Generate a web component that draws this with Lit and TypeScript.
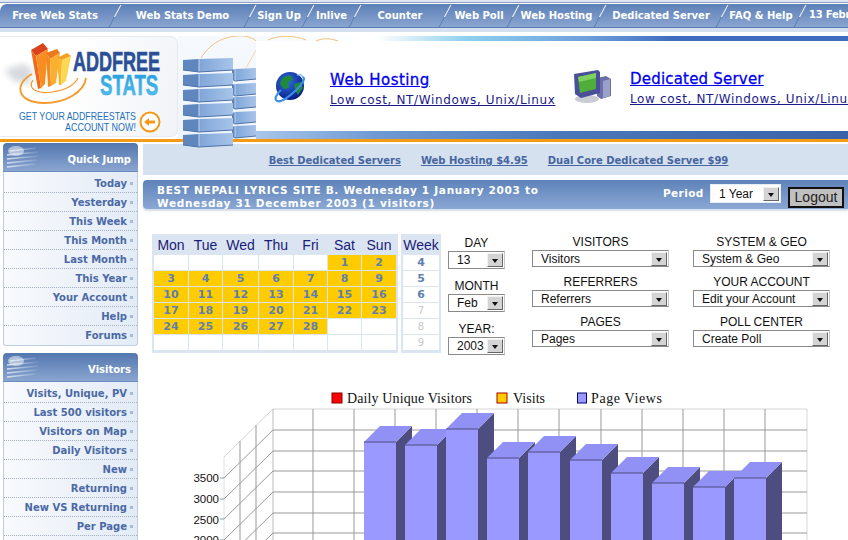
import { html, svg, css, LitElement } from 'lit';
import { customElement } from 'lit/decorators.js';

const NAV: [string, number][] = [
  ['Free Web Stats', 115], ['Web Stats Demo', 135], ['Sign Up', 58], ['Inlive', 47], ['Counter', 90],
  ['Web Poll', 68], ['Web Hosting', 87], ['Dedicated Server', 122], ['FAQ & Help', 78],
];
const QUICK = ['Today', 'Yesterday', 'This Week', 'This Month', 'Last Month', 'This Year', 'Your Account', 'Help', 'Forums'];
const VISITORS = ['Visits, Unique, PV', 'Last 500 visitors', 'Visitors on Map', 'Daily Visitors', 'New', 'Returning', 'New VS Returning', 'Per Page', ''];
const DAYS = ['Mon', 'Tue', 'Wed', 'Thu', 'Fri', 'Sat', 'Sun'];
const WEEKS = ['4', '5', '6', '7', '8', '9'];
const SELECTS = [
  ['VISITORS', 'Visitors', 'SYSTEM & GEO', 'System & Geo'],
  ['REFERRERS', 'Referrers', 'YOUR ACCOUNT', 'Edit your Account'],
  ['PAGES', 'Pages', 'POLL CENTER', 'Create Poll'],
];

// front x, top y of each bar in the chart
const BARS = [[364, 442], [405, 445], [446, 429], [487, 458], [528, 452], [570, 460], [611, 473], [652, 483], [693, 487], [734, 478]];
const GRID_X = [313, 354, 395, 436, 477, 518, 559, 601, 642, 683, 724, 765];
const GRID_Y = [430, 451, 471, 492, 513, 533];

const brick = (x: number, y: number, w: number, h: number, face: number) => svg`
  <polygon points="${x},${y + 1} ${x + face},${y} ${x + face},${y + h} ${x},${y + h - 2}" fill="#5f86bd"/>
  <polygon points="${x + face},${y} ${x + w},${y - 1} ${x + w},${y + h - 2} ${x + face},${y + h}" fill="url(#brickFront)"/>
  <path d="M${x + face} ${y}V${y + h}" stroke="#d8e6f6" stroke-width=".8"/>
  <path d="M${x} ${y + h - 2}L${x + face} ${y + h}L${x + w} ${y + h - 2}" fill="none" stroke="#4c72a8"/>`;

const bricks = () => [
  ...[69, 84, 97, 112, 126].map((y) => brick(232, y, 24, 12, 3)),
  ...[59, 74, 89, 104, 119, 134].map((y) => brick(183, y, 50, 13, 16)),
];

@customElement('app-root')
export class AppRoot extends LitElement {
  static styles = css`
    :host {
      display: block;
      width: 848px;
      height: 540px;
      overflow: hidden;
      position: relative;
      background: #fff;
      font-family: "DejaVu Sans", sans-serif;
    }
    * { box-sizing: border-box; }

    .topline { height: 4px; background: #dfe6f1; border-bottom: 1px solid #fff; border-top: 2px solid #dfe6f1; box-shadow: inset 0 1px 0 #8b9cc2; }
    .nav {
      display: flex;
      height: 24px;
      align-items: center;
      background: linear-gradient(#5c80b8, #8aa5d0);
      border-bottom: 1px solid #5a7cb2;
      border-top-left-radius: 7px;
      color: #fff;
      font-size: 10px;
      font-weight: bold;
      white-space: nowrap;
      overflow: hidden;
    }
    .nav-item { position: relative; text-align: center; flex: none; line-height: 22px; }
    .nav-item:first-child { padding-right: 5px; }
    .nav-item::after {
      content: "";
      position: absolute;
      right: 0;
      top: 0;
      width: 1px;
      height: 24px;
      transform: skewX(-28deg);
      background: linear-gradient(#fff 50%, #5a7cb2 50%);
    }
    .nav-date { padding-left: 9px; margin-top: -3px; letter-spacing: -0.2px; }
    .under { height: 8px; background: linear-gradient(#d6e1ef 50%, #fff 50%); }

    .header { display: flex; height: 103px; position: relative; }
    .logo { flex: none; width: 178px; height: 101px; background: linear-gradient(100deg, #fff 40%, #f1f3f7); border: 1px solid #e8eaee; border-left: 0; border-radius: 0 7px 7px 0; }
    .logo svg { display: block; }
    .gap { flex: none; width: 78px; background: linear-gradient(#f6fafe, #eef4fb); }
    .banner { flex: 1; min-width: 0; display: flex; flex-direction: column; }
    .strip-top { height: 5px; background: linear-gradient(90deg, #f6fafe 0, #fff 120px, #8fd0ee 210px, #6ea0da 330px, #3d6cc0 420px, #3d6cc0 100%); }
    .ads { height: 90px; display: flex; background: #fff; overflow: hidden; }
    .strip-bottom { height: 8px; background: linear-gradient(90deg, #a9c6ea, #6e9ad4 120px, #4b78bb 300px, #3a62a8 100%); }
    .ad { display: flex; }
    .ad-one { flex: none; width: 317px; padding-left: 17px; }
    .ad-two { flex: 1; min-width: 0; }
    .ad svg { flex: none; margin-top: 29px; }
    .ad-copy { padding-top: 29px; white-space: nowrap; }
    .ad-one .ad-copy { margin-left: 23px; }
    .ad-two .ad-copy { margin-left: 19px; margin-top: -1px; }
    .ad-title { color: #0000ee; font-size: 15px; font-weight: 500; text-decoration: underline; letter-spacing: 0.45px; line-height: 20px; -webkit-text-stroke: 0.3px #0000ee; }
    .ad-two .ad-title { letter-spacing: 0.2px; }
    .ad-sub { color: #1a1a8a; font-size: 12px; text-decoration: underline; letter-spacing: 0.65px; margin-top: 2px; line-height: 16px; }
    .orange { height: 3px; background: #f49a14; }
    .bricks { position: absolute; left: 178px; top: 36px; pointer-events: none; }

    .body { display: grid; grid-template-columns: 143px 1fr; }

    .side { padding: 1px 5px 0 3px; }
    .box { margin-bottom: 7px; }
    .box-head {
      height: 29px;
      position: relative;
      background: linear-gradient(#5377b0, #8aa5d0);
      border-radius: 4px 4px 0 0;
      border-bottom: 1px solid #6b8cc0;
      color: #fff;
      font-size: 10px;
      font-weight: bold;
      text-align: right;
      padding: 11px 7px 0 0;
      overflow: hidden;
    }
    .box-head svg { position: absolute; left: 0; top: 0; }
    .box-body { border: 1px solid #bccee4; border-top: 0; border-radius: 0 0 3px 3px; background: linear-gradient(90deg, #f8fafd, #e3ebf6); padding-top: 2px; }
    .row {
      height: 19px;
      border-bottom: 1px dotted #a3aec0;
      display: flex;
      justify-content: flex-end;
      align-items: center;
      padding-right: 4px;
      color: #4a69a5;
      font-size: 10px;
      font-weight: bold;
      white-space: nowrap;
    }
    .row i { width: 3px; height: 3px; background: #a8bad4; margin-left: 3px; }
    .row:last-child { border-bottom: 0; }

    .main { display: flex; flex-direction: column; }
    .links {
      height: 31px;
      margin-top: 2px;
      background: #d6e1ef;
      display: flex;
      justify-content: center;
      gap: 20px;
      padding: 11px 0 0 6px;
      font-size: 10px;
      font-weight: bold;
      color: #47659f;
      white-space: nowrap;
    }
    .links span { text-decoration: underline; }
    .title {
      height: 29px;
      margin-top: 5px;
      background: linear-gradient(#5e82b9, #8aa8d4);
      border-radius: 4px 0 0 4px;
      box-shadow: 0 2px 2px #d5dde9;
      color: #fff;
      display: flex;
      font-size: 10.5px;
      font-weight: bold;
      letter-spacing: 0.7px;
    }
    .title-text { padding: 4px 0 0 14px; width: 520px; line-height: 13px; white-space: nowrap; overflow: hidden; }
    .period { padding-top: 7px; width: 47px; letter-spacing: 0.4px; }
    .title .sel { margin-top: 4px; width: 71px; height: 19px; border: 1px solid #e8edf5; background: #fff; }
    .logout {
      width: 56px;
      height: 21px;
      margin: 7px 0 0 7px;
      background: #c0c0c0;
      border: 2px solid #111;
      color: #222;
      font: 14px/17px "Liberation Sans", sans-serif;
      letter-spacing: 0;
      text-align: center;
    }

    .controls { display: flex; height: 154px; margin-top: 25px; padding-left: 9px; }
    .cal { display: grid; height: 119px; background: #dbe5f1; padding: 0 2px 3px; gap: 1px;
      grid-template-columns: 34px 33px 35px 34px 33px 33px 34px; grid-template-rows: 20px repeat(6, 15px); }
    .week { display: grid; height: 119px; width: 40px; margin-left: 3px; background: #dbe5f1; padding: 0 2px 3px; gap: 1px;
      grid-template-rows: 20px repeat(6, 15px); }
    .hd { color: #1b1b78; font: 14px/23px "Liberation Sans", sans-serif; text-align: center; }
    .week .hd { margin: 0 -2px; }
    .cell { background: #fff; color: #5f7fb0; font-size: 11px; font-weight: bold; text-align: center; line-height: 16px; }
    .cell.on { background: #fc0; }
    .cell.off { color: #c8c8c8; font-weight: normal; font-size: 10px; }

    .date-col { width: 57px; margin-left: 7px; margin-top: 2px; text-align: center; }
    .lbl { font: 12px/14px "Liberation Sans", sans-serif; color: #111; text-align: center; }
    .date-col .sel { height: 18px; margin: 1px 0 10px; }
    .sel-col { width: 137px; }
    .sel-col.a { margin-left: 27px; }
    .sel-col.b { margin-left: 24px; }
    .sel-col .lbl { height: 15px; margin-top: 1px; }
    .sel-col .sel { height: 17px; margin-bottom: 8px; margin-top: 0; }

    .sel {
      display: flex;
      align-items: center;
      justify-content: space-between;
      border-top: 1px solid #8a8a8a;
      border-left: 1px solid #8a8a8a;
      border-bottom: 1px solid #8a8a8a;
      border-right: 1px solid #c8c8c8;
      background: #fff;
      color: #111;
      font: 12px "Liberation Sans", sans-serif;
      letter-spacing: 0;
      padding-left: 8px;
      white-space: nowrap;
    }
    .arrow {
      width: 16px;
      height: 14px;
      margin-right: 1px;
      flex: none;
      background: #d4d4d4;
      border: 1px solid;
      border-color: #f2f2f2 #666 #666 #f2f2f2;
      display: flex;
      align-items: flex-end;
      justify-content: center;
      padding-bottom: 3px;
    }
    .arrow::after { content: ""; border: 3.5px solid transparent; border-top: 4px solid #111; border-bottom: 0; }

    .chart { display: block; }
    .chart text { font-family: "Liberation Serif", serif; font-size: 14px; fill: #111; }
    .chart text.axis { font-family: "Liberation Sans", sans-serif; font-size: 11.5px; text-anchor: end; }
  `;

  private box(title: string, rows: string[]) {
    return html`
      <div class="box">
        <div class="box-head">
          <svg width="42" height="29" viewBox="0 0 42 29">
            <defs><linearGradient id="sh" x1="0" x2="1"><stop offset="0" stop-color="#fff" stop-opacity=".7"/><stop offset="1" stop-color="#fff" stop-opacity=".05"/></linearGradient></defs>
            <path d="M4 12l32-3M4 16l32-3M4 20l30-3M4 24l28-3M7 8l26-3" stroke="url(#sh)" stroke-width="1.6"/>
            <ellipse cx="13" cy="8" rx="8" ry="5" fill="#fff" opacity=".5"/>
          </svg>
          ${title}
        </div>
        <div class="box-body">
          ${rows.map((r) => html`<div class="row">${r}${r ? html`<i></i>` : ''}</div>`)}
        </div>
      </div>`;
  }

  private sel(text: string) {
    return html`<div class="sel"><span>${text}</span><span class="arrow"></span></div>`;
  }

  private calendar() {
    const cells = [];
    for (let i = 0; i < 5; i++) cells.push(html`<div class="cell"></div>`);
    for (let d = 1; d <= 28; d++) cells.push(html`<div class="cell on">${d}</div>`);
    for (let i = 0; i < 9; i++) cells.push(html`<div class="cell"></div>`);
    return html`
      <div class="cal">
        ${DAYS.map((d) => html`<div class="hd">${d}</div>`)}
        ${cells}
      </div>
      <div class="week">
        <div class="hd">Week</div>
        ${WEEKS.map((w, i) => html`<div class="cell ${i > 2 ? 'off' : ''}">${w}</div>`)}
      </div>`;
  }

  private chart() {
    return html`
      <svg class="chart" width="705" height="152" viewBox="143 388 705 152">
        <rect x="332" y="393" width="10" height="10" fill="#f00" stroke="#800" />
        <text x="347" y="403" textLength="125">Daily Unique Visitors</text>
        <rect x="497" y="393" width="10" height="10" fill="#fc0" stroke="#a00" />
        <text x="513" y="403" textLength="32">Visits</text>
        <rect x="577.500" y="393" width="9" height="10" fill="#99f" stroke="#007" />
        <text x="591" y="403" textLength="71">Page Views</text>

        <path d="M224 457L273 409H807V540" fill="none" stroke="#d6d6d6"/>
        <path d="M240 441V540M256 425V540" stroke="#999" fill="none"/>
        <path d="M224 457V540" stroke="#e0e0e0"/>
        <path d="M273 409V540" stroke="#bbb"/>
        ${GRID_X.map((x) => svg`<path d="M${x} 409V540" stroke="#999"/>`)}
        ${GRID_Y.map((y) => svg`
          <path d="M273 ${y}H807" stroke="#999"/>
          <path d="M273 ${y}L224 ${y + 48}H220" stroke="#999" fill="none"/>`)}

        <text class="axis" x="219" y="482">3500</text>
        <text class="axis" x="219" y="503">3000</text>
        <text class="axis" x="219" y="524">2500</text>
        <text class="axis" x="219" y="544">2000</text>

        ${BARS.map(([x, y]) => svg`
          <polygon points="${x + 32},${y} ${x + 48},${y - 16} ${x + 48},540 ${x + 32},540" fill="#4d4d80"/>
          <polygon points="${x},${y} ${x + 16},${y - 16} ${x + 48},${y - 16} ${x + 32},${y}" fill="#9090f5"/>
          <rect x=${x} y=${y} width="32" height=${540 - y} fill="#99f"/>
          <path d="M${x} ${y}H${x + 32}" stroke="#4d4d80"/>`)}
      </svg>`;
  }

  render() {
    return html`
      <div class="topline"></div>
      <div class="nav">
        ${NAV.map(([t, w]) => html`<div class="nav-item" style="width:${w}px">${t}</div>`)}
        <div class="nav-date">13 Febr</div>
      </div>
      <div class="under"></div>

      <div class="header">
        <div class="logo">
          <svg width="177" height="100" viewBox="0 37 177 100">
            <defs>
              <linearGradient id="stats" x1="0" y1="0" x2="0" y2="1"><stop offset="0" stop-color="#1f97db"/><stop offset="1" stop-color="#5cc4ee"/></linearGradient>
              <filter id="soft"><feGaussianBlur stdDeviation="3"/></filter>
            </defs>
            <polygon points="5,70 22,64 32,68 30,85 12,80" fill="#d6d9de" filter="url(#soft)"/>
            <path d="M32 74C14 84 16 102 44 103C66 103 84 92 86 78" fill="none" stroke="#f39a2c" stroke-width="1.800"/>
            <path d="M33 80C26 90 40 94 52 92C66 90 74 86 78 78" fill="none" stroke="#f39a2c" stroke-width="1.200"/>
            <polygon points="31,50 43,43 48,49 36,56" fill="#d9421a"/>
            <polygon points="31,50 36,56 41,88 38,89" fill="#ee6a1a"/>
            <polygon points="36,56 48,49 45,84 41,88" fill="#f88e22"/>
            <polygon points="46,53 57,49 60,53 50,59" fill="#ec7a1c"/>
            <polygon points="46,53 50,59 51,86 48,87" fill="#f28a20"/>
            <polygon points="50,59 60,53 56,83 51,86" fill="#fcae2e"/>
            <polygon points="57,58 67,53 71,56 62,60" fill="#f5a020"/>
            <polygon points="57,58 62,60 61,85 59,85" fill="#f9b52e"/>
            <polygon points="62,60 71,56 66,81 61,85" fill="#fdd752"/>
            <text transform="translate(73 71) scale(.644 1)" font-family="Liberation Sans" font-weight="bold" font-size="28" fill="#2a4f96" stroke="#2a4f96" stroke-width=".7">ADDFREE</text>
            <text transform="translate(100 95) scale(.642 1)" font-family="Liberation Sans" font-weight="bold" font-size="29" fill="url(#stats)" stroke="#3aaee4" stroke-width=".6">STATS</text>
            <text x="19" y="120" font-family="Liberation Sans" font-size="11" fill="#1f70bd" textLength="117" lengthAdjust="spacingAndGlyphs">GET YOUR ADDFREESTATS</text>
            <text x="65" y="131" font-family="Liberation Sans" font-size="11" fill="#1f70bd" textLength="71" lengthAdjust="spacingAndGlyphs">ACCOUNT NOW!</text>
            <circle cx="150" cy="122" r="9.500" fill="#fff" stroke="#f39a1c" stroke-width="2"/>
            <path d="M144 122l5-4v2.500h6v3h-6V126z" fill="#f39a1c"/>
          </svg>
        </div>
        <div class="gap"></div>
        <div class="banner">
          <div class="strip-top"></div>
          <div class="ads">
            <div class="ad ad-one">
              <svg width="34" height="34" viewBox="0 0 34 34">
                <defs><radialGradient id="globe" cx=".4" cy=".35" r=".7"><stop offset="0" stop-color="#2f6fe0"/><stop offset="1" stop-color="#061a80"/></radialGradient></defs>
                <circle cx="17" cy="16" r="14" fill="url(#globe)"/>
                <path d="M9 8l8-3 3 4-5 4 1 5-5 1-4-5zM21 14l7-2 2 6-5 7-3-5z" fill="#1f8a3a"/>
                <path d="M29 7c4 0 2 6-8 15S5 33 3 30s3-8 5-10" fill="none" stroke="#3a8fe8" stroke-width="2.200"/>
                <path d="M24 5c4-1 6 0 5 3" fill="none" stroke="#9bc4f0" stroke-width="1.500"/>
              </svg>
              <div class="ad-copy">
                <div class="ad-title">Web Hosting</div>
                <div class="ad-sub">Low cost, NT/Windows, Unix/Linux </div>
              </div>
            </div>
            <div class="ad ad-two">
              <svg width="38" height="36" viewBox="0 0 38 36" style="margin-top:28px">
                <ellipse cx="14" cy="30" rx="12" ry="4" fill="#c9ccd2"/>
                <polygon points="24,9 33,7 38,10 38,27 28,30 24,27" fill="#6a6fa8"/>
                <polygon points="30,12 37,10 37,27 30,29" fill="#9aa0c8"/>
                <polygon points="1,5 25,1 27,3 27,24 8,29 2,25" fill="#4a4f9a"/>
                <polygon points="5,8 23,4 23,20 7,24" fill="#4fae3a"/>
                <polygon points="5,8 23,4 23,9 6,13" fill="#7ed060"/>
              </svg>
              <div class="ad-copy">
                <div class="ad-title">Dedicated Server</div>
                <div class="ad-sub">Low cost, NT/Windows, Unix/Linux</div>
              </div>
            </div>
          </div>
          <div class="strip-bottom"></div>
        </div>
      </div>
      <div class="orange"></div>

      <svg class="bricks" width="170" height="114" viewBox="178 36 170 114">
        <defs>
          <linearGradient id="brickFront" x1="0" x2="1"><stop offset="0" stop-color="#7fa5d8"/><stop offset="1" stop-color="#a8c5ea"/></linearGradient>
        </defs>
        <path d="M201 58C211 42 226 35 244 36C250 37 254 39 256 41" fill="none" stroke="#f3c27a" stroke-width="1"/>
        <path d="M256 50L246 68" fill="none" stroke="#f3d8ac" stroke-width="1"/>
        <path d="M268 40C278 35 294 35 306 40M316 41C322 38 330 38 338 41" fill="none" stroke="#f3c27a" stroke-width="1"/>
        ${bricks()}
      </svg>

      <div class="body">
        <div class="side">
          ${this.box('Quick Jump', QUICK)}
          ${this.box('Visitors', VISITORS)}
        </div>
        <div class="main">
          <div class="links">
            <span>Best Dedicated Servers</span>
            <span>Web Hosting $4.95</span>
            <span>Dual Core Dedicated Server $99</span>
          </div>
          <div class="title">
            <div class="title-text">BEST NEPALI LYRICS SITE B. Wednesday 1 January 2003 to<br />Wednesday 31 December 2003 (1 visitors)</div>
            <div class="period">Period</div>
            ${this.sel('1 Year')}
            <div class="logout">Logout</div>
          </div>
          <div class="controls">
            ${this.calendar()}
            <div class="date-col">
              <div class="lbl">DAY</div>${this.sel('13')}
              <div class="lbl">MONTH</div>${this.sel('Feb')}
              <div class="lbl">YEAR:</div>${this.sel('2003')}
            </div>
            <div class="sel-col a">
              ${SELECTS.map((s) => html`<div class="lbl">${s[0]}</div>${this.sel(s[1])}`)}
            </div>
            <div class="sel-col b">
              ${SELECTS.map((s) => html`<div class="lbl">${s[2]}</div>${this.sel(s[3])}`)}
            </div>
          </div>
          ${this.chart()}
        </div>
      </div>
    `;
  }
}
